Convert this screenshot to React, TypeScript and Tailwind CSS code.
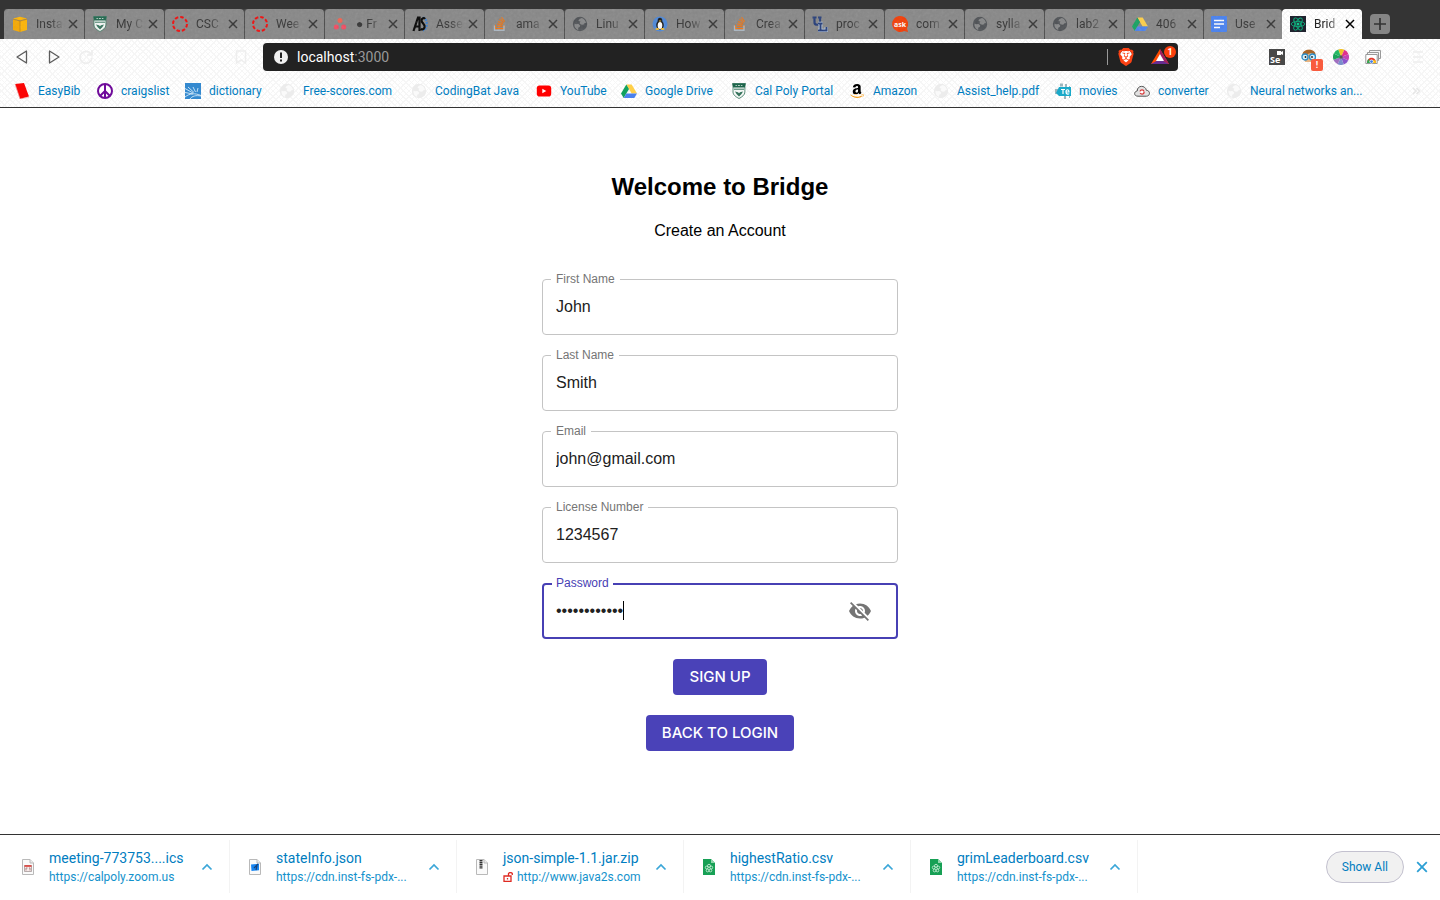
import { useState } from "react";
import type { ReactNode } from "react";
import { FaAmazon, FaStackOverflow } from "react-icons/fa";
import { MdVisibilityOff } from "react-icons/md";
import { SiBrave } from "react-icons/si";

const svg = "h-4 w-4 shrink-0";

function Cube() {
  return (
    <svg className={svg} viewBox="0 0 16 16">
      <path d="M1 3 8 5v11l-7-2z" fill="#f7a800" />
      <path d="m15 3-7 2v11l7-2z" fill="#ffb400" />
      <path d="m1 2.6 7-1.800 7 1.800-7 2z" fill="#ffb400" />
      <path d="M1 3.200 8 5l7-1.800M8 5v11" fill="none" stroke="#a97b2c" strokeWidth=".7" />
    </svg>
  );
}

function PolyShield() {
  return (
    <svg className={svg} viewBox="0 0 16 16">
      <path d="M1.500.5h13l-.6 2.500V9c0 3-3 5-5.900 6.500C5 14 2 12 2 9V3z" fill="#f4f7f5" stroke="#35735c" strokeWidth=".8" />
      <path d="M1.500.5h13l-.6 4H2.200z" fill="#1d654b" />
      <path d="M3 6.200h10" stroke="#35735c" />
      <path d="m4 8.500 3 .8 1 1 1-1 3-.8-1.500 2.500L8 13.500 5.500 11z" fill="#35735c" />
      <path d="M4.500 2.500h1.400m1 0h2m1 0h1.500" stroke="#b5cec4" />
    </svg>
  );
}

function CanvasRing() {
  return (
    <svg className={svg} viewBox="0 0 16 16">
      <circle cx="8" cy="8" r="7" fill="none" stroke="#f00b0b" strokeWidth="2" strokeDasharray="3.500 2" />
    </svg>
  );
}

function Asana() {
  return (
    <svg className={svg} viewBox="0 0 16 16">
      <circle cx="8" cy="4.500" r="2.500" fill="#f4614f" />
      <circle cx="4.300" cy="11" r="2.500" fill="#f2495f" />
      <circle cx="11.700" cy="11" r="2.500" fill="#f2495f" />
    </svg>
  );
}

function ASLogo() {
  return (
    <svg className={svg} viewBox="0 0 16 16">
      <path d="M11 1.500c5 1 5 12 0 13" fill="none" stroke="#3a7fd0" strokeWidth="2" strokeDasharray="2 1" />
      <path d="M1.500 15 6 1.500h1.500V15M3 10.500h5" fill="none" stroke="#000" strokeWidth="2.200" />
      <path d="M13 3c-1-1.500-3.500-1-3.500 1.500S13 8 12.600 11c-.4 2.500-2.600 3-4 1.800" fill="none" stroke="#000" strokeWidth="2.200" />
    </svg>
  );
}

function Tux() {
  return (
    <svg className={svg} viewBox="0 0 16 16">
      <circle cx="8" cy="8" r="7.500" fill="#4a86d8" />
      <ellipse cx="8" cy="4.500" rx="2.300" ry="2.700" fill="#171717" />
      <ellipse cx="8" cy="9" rx="3.800" ry="4.500" fill="#171717" />
      <ellipse cx="8" cy="9.500" rx="2.300" ry="3.600" fill="#fff" />
      <path d="M6.800 4.600h2.400L8 6.300z" fill="#f5b928" />
      <ellipse cx="5.300" cy="13" rx="2" ry="1.100" fill="#f5b928" />
      <ellipse cx="10.700" cy="13" rx="2" ry="1.100" fill="#f5b928" />
    </svg>
  );
}

function StackOverflow() {
  return (
    <svg className={svg} viewBox="0 0 16 16">
      <FaStackOverflow x="1" y="0" size={14} color="#f2720c" />
      <path d="M2.500 9.500v4.700h9.500V9.500" fill="none" stroke="#a9b6c2" strokeWidth="1.400" />
    </svg>
  );
}

function ULLogo() {
  return (
    <svg className={svg} viewBox="0 0 16 16">
      <path d="M.5 1.500h4M6 1.500h3.500M2.500 1.500v5c0 3 5.500 3 5.500 0v-5" fill="none" stroke="#243c78" strokeWidth="2.200" />
      <path d="M6 7.500h4.500M8.500 7.500v7M6 14.500h8.500v-3.500" fill="none" stroke="#c4d4e4" strokeWidth="3.600" />
      <path d="M6 7.500h4.500M8.500 7.500v7M6 14.500h8.500v-3.500" fill="none" stroke="#243c78" strokeWidth="2" />
    </svg>
  );
}

function Ask() {
  return (
    <svg className={svg} viewBox="0 0 16 16">
      <path d="M8 0a8 8 0 1 0 4 15l4 1-1-4A8 8 0 0 0 8 0z" fill="#f23c05" />
      <text x="8" y="10.500" textAnchor="middle" fill="#fff" fontSize="7" fontWeight="700" fontFamily="Open Sans, sans-serif">ask</text>
    </svg>
  );
}

function Drive() {
  return (
    <svg className={svg} viewBox="0 0 16 16">
      <path d="M5.300 1.500h5.400L16 10.500h-5.300z" fill="#ffcf48" />
      <path d="M5.300 1.500 0 10.500 2.700 15 8 6z" fill="#12a15f" />
      <path d="M5.400 10.500H16L13.300 15H2.700z" fill="#4a81ee" />
    </svg>
  );
}

function Docs() {
  return (
    <svg className={svg} viewBox="0 0 16 16">
      <rect width="16" height="16" rx="1" fill="#4680f0" />
      <path d="M3 4.500h10M3 8h10M3 11.500h6" stroke="#fff" strokeWidth="1.700" />
    </svg>
  );
}

function ReactLogo() {
  return (
    <svg className={svg} viewBox="0 0 16 16">
      <path fill="#20232f" d="M0 0h16v16H0z" />
      <g fill="none" stroke="#0fae7c" strokeWidth=".9">
        <ellipse cx="8" cy="8" rx="6.800" ry="2.600" />
        <ellipse cx="8" cy="8" rx="6.800" ry="2.600" transform="rotate(60 8 8)" />
        <ellipse cx="8" cy="8" rx="6.800" ry="2.600" transform="rotate(120 8 8)" />
      </g>
      <circle cx="8" cy="8" r="1.500" fill="#12c48c" />
    </svg>
  );
}

function EasyBib() {
  return (
    <svg className={svg} viewBox="0 0 16 16">
      <path d="m1 1 9-1 5 13.500L6 16z" fill="#fb0505" />
      <path d="m1 1 5 15 9-2" fill="none" stroke="#e9a5a5" strokeWidth=".7" />
    </svg>
  );
}

function Peace() {
  return (
    <svg className={svg} viewBox="0 0 16 16">
      <circle cx="8" cy="8" r="7" fill="#fff" stroke="#6f0b9a" strokeWidth="2" />
      <path d="M8 1v14M8 8l-5 5M8 8l5 5" stroke="#6f0b9a" strokeWidth="2" />
    </svg>
  );
}

function Dictionary() {
  return (
    <svg className={svg} viewBox="0 0 16 16">
      <path fill="#3489cf" d="M0 0h16v16H0z" />
      <path d="M0 5.500 8 10M3 4l6 5.500M8 4l2.500 5M13 5l-1 4M0 9.500l8 1.500M0 14c5-4 10-4 16-1.500M5 16c2-3 6-4 11-3" fill="none" stroke="#d4e9f8" strokeWidth=".9" />
    </svg>
  );
}

function YouTube() {
  return (
    <svg className={svg} viewBox="0 0 16 16">
      <rect x=".8" y="2.500" width="14.400" height="11" rx="2.800" fill="#f00" />
      <path d="m6.300 5.700 4 2.300-4 2.300z" fill="#fff" />
    </svg>
  );
}

function Amazon() {
  return (
    <svg className={svg} viewBox="0 0 16 16">
      <defs>
        <clipPath id="letter"><path d="M0 0h16v10.900H0z" /></clipPath>
        <clipPath id="smile"><path d="M0 10.900h16V16H0z" /></clipPath>
      </defs>
      <g clipPath="url(#letter)"><FaAmazon size={16} color="#000" /></g>
      <g clipPath="url(#smile)"><FaAmazon size={16} color="#f79b14" /></g>
    </svg>
  );
}

function Movies() {
  return (
    <svg className={svg} viewBox="0 0 16 16">
      <path d="M5 .5h3v3H5zM10 1h2v3h-2zM0 6h4v5H0zM9 12h2v4H9zM14 3h1v12h-1z" fill="#9db5bc" />
      <path d="M4 4h12v9H4l-3-3z" fill="#19a9c9" />
      <path d="M6 6.500h4M8 6.500v4.500M11 9h3c0-3-3-3-3 0s3 2 3 1.500" fill="none" stroke="#fff" strokeWidth="1.200" />
    </svg>
  );
}

function Cloud() {
  return (
    <svg className={svg} viewBox="0 0 16 16">
      <path d="M4 13.200C-.5 13.200-.2 8.300 3.200 8 3.200 2 11.200 1.800 12.400 7.300c4.200.2 4 5.900 0 5.900z" fill="#e2e2e2" stroke="#555" />
      <circle cx="8" cy="9" r="2.100" fill="#fff" stroke="#d73636" strokeWidth="1.200" strokeDasharray="5 1.500" />
    </svg>
  );
}

function Selenium() {
  return (
    <svg className={svg} viewBox="0 0 16 16">
      <path fill="#484848" d="M0 0h16v16H0z" />
      <path d="M8 2h4v1l2-1v4l-2-1v1H8z" fill="#fff" />
      <text x="1" y="14" fill="#fff" fontSize="9" fontWeight="700" fontFamily="Open Sans, sans-serif">Se</text>
    </svg>
  );
}

function Glasses() {
  return (
    <svg className={svg} viewBox="0 0 16 16">
      <path d="M2 6C2-1 14-1 14 6l-2 7H4z" fill="#e8b684" />
      <path d="M1.500 6C1-1 15-1 14.500 6L10 4 5 5.500z" fill="#a8662a" />
      <g fill="#d8f1fb" stroke="#2f8dc6" strokeWidth="1.300">
        <circle cx="4" cy="8" r="3" />
        <circle cx="11.500" cy="8" r="3" />
      </g>
      <circle cx="4.500" cy="8" r=".9" fill="#222" />
      <circle cx="11" cy="8" r=".9" fill="#222" />
    </svg>
  );
}

function ColorWheel() {
  const slices = ["#f1c229", "#e0318c", "#c343b5", "#8a55ca", "#7b8ecb", "#a070c0", "#19a35a", "#25b765"];
  return (
    <svg className={svg} viewBox="0 0 16 16">
      {slices.map((fill, i) => (
        <path key={fill} d="M8 8V0a8 8 0 0 1 5.660 2.340z" fill={fill} transform={`rotate(${i * 45 - 20} 8 8)`} />
      ))}
      <circle cx="8" cy="8" r="1.800" fill="#555" />
    </svg>
  );
}

function Windows() {
  return (
    <svg className={svg} viewBox="0 0 16 16">
      <path d="M4.500 1.500h11v8h-11z" fill="#f4f4f4" stroke="#999" />
      <path d="M2.500 3.500h11v8h-11z" fill="#f4f4f4" stroke="#999" />
      <path d="M.8 5.500h11.400v9H.8z" fill="#fff" stroke="#999" />
      <path d="M2 14c0-7 9-7 9 0z" fill="#e33b2e" />
      <path d="M2 14c0-2 .5-3 1.500-4L6 14z" fill="#32a853" />
      <path d="M7.500 14H11c0-1-.2-2-.7-2.700H8z" fill="#fbc116" />
      <circle cx="6.500" cy="12.600" r="2" fill="#fff" />
      <circle cx="6.500" cy="12.600" r="1.400" fill="#3e7de9" />
    </svg>
  );
}

function Globe({ faint = false }: { faint?: boolean }) {
  return (
    <svg className={svg} viewBox="0 0 16 16">
      <circle cx="8" cy="8" r="7.200" fill={faint ? "#ececec" : "#4d5054"} />
      <g fill={faint ? "#fafafa" : "#858687"}>
        <path d="M2.500 7.500 4 8.300l2.500-.2 1.700 1.300-.5 1.600-1.500.7v2.300C3.500 13 2 10.500 2.500 7.500z" />
        <path d="M7 3.500 9.500 2c2.300.4 4.200 2.300 4.500 5l-1.500.2-1.300 1.600-2.300-.3-1.400-1.400 1-1.600-2-.5z" />
      </g>
    </svg>
  );
}

function Cross({ className }: { className: string }) {
  return (
    <svg className={className} viewBox="0 0 10 10" fill="none" stroke="currentColor" strokeWidth="1.500">
      <path d="m1 1 8 8M9 1 1 9" />
    </svg>
  );
}

type TabInfo = { title: string; icon: ReactNode };

const tabs: TabInfo[] = [
  { title: "Insta", icon: <Cube /> },
  { title: "My C", icon: <PolyShield /> },
  { title: "CSC", icon: <CanvasRing /> },
  { title: "Wee", icon: <CanvasRing /> },
  { title: "● Fr", icon: <Asana /> },
  { title: "Asse", icon: <ASLogo /> },
  { title: "ama", icon: <StackOverflow /> },
  { title: "Linu", icon: <Globe /> },
  { title: "How", icon: <Tux /> },
  { title: "Crea", icon: <StackOverflow /> },
  { title: "proc", icon: <ULLogo /> },
  { title: "com", icon: <Ask /> },
  { title: "sylla", icon: <Globe /> },
  { title: "lab2", icon: <Globe /> },
  { title: "406", icon: <Drive /> },
  { title: "Use", icon: <Docs /> },
];

const fade = "whitespace-nowrap [mask-image:linear-gradient(to_right,#000_14px,transparent_28px)]";

const hatch =
  "bg-white bg-[repeating-linear-gradient(45deg,#f6f6f6_0px,#f6f6f6_1px,transparent_1px,transparent_4px),repeating-linear-gradient(-45deg,#f6f6f6_0px,#f6f6f6_1px,transparent_1px,transparent_4px)]";

function TabStrip() {
  return (
    <div className="flex h-[39px] items-end bg-[#343434] pl-1">
      <div className="relative flex h-[30px]">
        {tabs.map((tab, i) => (
          <div
            key={i}
            className="flex w-20 items-center rounded-t-sm border-l border-[#4b4b4b] bg-[#878787] pr-[6px] pl-[7px] text-[#333] first:border-[#878787] nth-[15]:w-[79px] nth-[16]:w-[79px]"
          >
            {tab.icon}
            <span className={`ml-2 ${fade}`}>{tab.title}</span>
            <button type="button" aria-label={`Close ${tab.title}`} className="ml-auto">
              <Cross className="h-[10px] w-[10px]" />
            </button>
          </div>
        ))}
        <svg className="pointer-events-none absolute inset-0 h-full w-full opacity-15" aria-hidden="true">
          <filter id="grain">
            <feTurbulence type="fractalNoise" baseFrequency="0.35" numOctaves="2" />
            <feColorMatrix type="saturate" values="0" />
          </filter>
          <rect width="100%" height="100%" filter="url(#grain)" />
        </svg>
      </div>
      <div className={`flex h-[30px] w-20 items-center rounded-t-sm pr-[7px] pl-2 text-[#222] ${hatch}`}>
        <ReactLogo />
        <span className={`ml-2 ${fade}`}>Brid</span>
        <button type="button" aria-label="Close Brid" className="ml-auto">
          <Cross className="h-[10px] w-[10px] text-black" />
        </button>
      </div>
      <button type="button" aria-label="New tab" className="mb-[5px] ml-2 flex h-5 w-5 items-center justify-center rounded-sm bg-[#858585]">
        <svg className="h-3 w-3" viewBox="0 0 12 12" stroke="#333" strokeWidth="1.700">
          <path d="M6 0v12M0 6h12" />
        </svg>
      </button>
    </div>
  );
}

function AddressRow() {
  return (
    <div className="flex h-9 items-center">
      <div className="flex w-[263px] items-center px-[14px]">
        <button type="button" aria-label="Back">
          <svg className="h-4 w-4" viewBox="0 0 16 16" fill="none" stroke="#5c5c5c" strokeWidth="1.300" strokeLinejoin="round">
            <path d="M12.500 2v12L3 8z" />
          </svg>
        </button>
        <button type="button" aria-label="Forward" className="ml-4">
          <svg className="h-4 w-4" viewBox="0 0 16 16" fill="none" stroke="#5c5c5c" strokeWidth="1.300" strokeLinejoin="round">
            <path d="M3.500 2v12L13 8z" />
          </svg>
        </button>
        <button type="button" aria-label="Reload" className="ml-4">
          <svg className="h-4 w-4" viewBox="0 0 16 16" fill="none" stroke="#eee" strokeWidth="1.700">
            <path d="M13 5a6 6 0 1 0 1 4M14 1v5H9" />
          </svg>
        </button>
        <button type="button" aria-label="Bookmark" className="ml-auto">
          <svg className="h-4 w-4" viewBox="0 0 16 16" fill="none" stroke="#eee" strokeWidth="1.500">
            <path d="M3.500 2h9v12L8 11l-4.500 3z" />
          </svg>
        </button>
      </div>
      <div className="flex h-7 flex-1 items-center rounded bg-[#222] pr-[2px] pl-[11px] text-sm text-[#999]">
        <svg className="h-[14px] w-[14px]" viewBox="0 0 14 14">
          <circle cx="7" cy="7" r="7" fill="#f1f1f1" />
          <path d="M7 2.500V8M7 9.500v2" stroke="#222" strokeWidth="2" />
        </svg>
        <span className="ml-[9px]">
          <span className="text-white">localhost</span>:3000
        </span>
        <span className="ml-auto h-4 w-px bg-[#999]" />
        <svg className="ml-[9px] h-[18px] w-[18px]" viewBox="0 0 18 18">
          <path d="M5 3h8l2 3-2 7-4 3-4-3-2-7z" fill="#fff" />
          <SiBrave size={18} color="#fb4214" />
        </svg>
        <span className="relative ml-4 flex w-[25px]">
          <svg className="h-4 w-[18px]" viewBox="0 0 18 16">
            <path d="M9 0 0 15h18z" fill="#ff4b00" />
            <path d="M0 15h18L9 10z" fill="#662d91" />
            <path d="M9 0v10l9 5z" fill="#9e1f63" />
            <path d="m9 5-4 7h8z" fill="#fff" />
          </svg>
          <span className="absolute -top-[3px] right-0 flex h-3 w-3 items-center justify-center rounded-full bg-[#fb3f0c] text-[9px] font-bold text-white">1</span>
        </span>
      </div>
      <div className="flex w-[262px] items-center gap-4 pr-[14px] pl-[91px]">
        <Selenium />
        <span className="relative">
          <Glasses />
          <span className="absolute -right-[6px] -bottom-[6px] flex h-3 w-3 items-center justify-center rounded-xs bg-[#f85c3e] text-[9px] font-bold text-white">!</span>
        </span>
        <ColorWheel />
        <Windows />
        <button type="button" aria-label="Menu" className="ml-auto">
          <svg className="h-4 w-4" viewBox="0 0 16 16" stroke="#f1f1f1" strokeWidth="2">
            <path d="M3 3h10M3 8h10M3 13h10" />
          </svg>
        </button>
      </div>
    </div>
  );
}

const bookmarks = [
  { name: "EasyBib", icon: <EasyBib />, width: "w-[83px]" },
  { name: "craigslist", icon: <Peace />, width: "w-[88px]" },
  { name: "dictionary", icon: <Dictionary />, width: "w-[94px]" },
  { name: "Free-scores.com", icon: <Globe faint />, width: "w-[132px]" },
  { name: "CodingBat Java", icon: <Globe faint />, width: "w-[125px]" },
  { name: "YouTube", icon: <YouTube />, width: "w-[85px]" },
  { name: "Google Drive", icon: <Drive />, width: "w-[110px]" },
  { name: "Cal Poly Portal", icon: <PolyShield />, width: "w-[118px]" },
  { name: "Amazon", icon: <Amazon />, width: "w-[84px]" },
  { name: "Assist_help.pdf", icon: <Globe faint />, width: "w-[122px]" },
  { name: "movies", icon: <Movies />, width: "w-[79px]" },
  { name: "converter", icon: <Cloud />, width: "w-[92px]" },
  { name: "Neural networks an...", icon: <Globe faint />, width: "w-[150px]" },
];

function Bookmarks() {
  return (
    <nav aria-label="Bookmarks" className="flex h-8 items-center pr-5 pl-[14px]">
      {bookmarks.map((b) => (
        <a key={b.name} href="#" className={`flex shrink-0 items-center gap-2 whitespace-nowrap text-[#007dc0] ${b.width}`}>
          {b.icon}
          {b.name}
        </a>
      ))}
      <button type="button" aria-label="More bookmarks" className="ml-auto">
        <svg className="h-2 w-2" viewBox="0 0 8 8" fill="none" stroke="#e6e6e6" strokeWidth="1.500">
          <path d="m1 1 3 3-3 3M4.500 1l3 3-3 3" />
        </svg>
      </button>
    </nav>
  );
}

function Field({ id, label, initial }: { id: string; label: string; initial: string }) {
  const [value, setValue] = useState(initial);
  return (
    <div className="relative h-14">
      <input
        id={id}
        value={value}
        onChange={(e) => setValue(e.target.value)}
        className="h-full w-full rounded border border-[#c4c4c4] px-[13px] text-base text-[#212121] outline-none"
      />
      <label htmlFor={id} className="absolute -top-2 left-[9px] bg-white px-[5px] text-xs text-[#757575]">
        {label}
      </label>
    </div>
  );
}

function PasswordField() {
  const [value, setValue] = useState("bridgepass12");
  return (
    <div className="relative flex h-14 items-center rounded border-2 border-[#4740b4] pr-6 pl-3">
      <input
        id="password"
        type="password"
        value={value}
        onChange={(e) => setValue(e.target.value)}
        className="h-full min-w-0 flex-1 text-base text-[#212121] outline-none"
      />
      <span className="absolute top-4 left-[79px] h-[19px] w-px bg-black" />
      <button type="button" aria-label="Toggle password visibility">
        <MdVisibilityOff className="h-6 w-6 text-[#757575]" />
      </button>
      <label htmlFor="password" className="absolute -top-[10px] left-2 bg-white px-1 text-xs text-[#4740b4]">
        Password
      </label>
    </div>
  );
}

function SignUp() {
  const button = "h-9 rounded bg-[#4a42b8] px-4 text-[15px] font-medium font-[Inter,sans-serif] text-white";
  return (
    <main className="flex flex-1 flex-col items-center bg-white pt-[65px] font-['Liberation_Sans',Arial,sans-serif] text-black">
      <h1 className="text-2xl leading-7 font-bold">Welcome to Bridge</h1>
      <p className="mt-[18px] text-base">Create an Account</p>
      <form className="mt-9 flex w-full max-w-[356px] flex-col gap-5" onSubmit={(e) => e.preventDefault()}>
        <Field id="first" label="First Name" initial="John" />
        <Field id="last" label="Last Name" initial="Smith" />
        <Field id="email" label="Email" initial="john@gmail.com" />
        <Field id="license" label="License Number" initial="1234567" />
        <PasswordField />
        <div className="flex flex-col items-center gap-5">
          <button type="submit" className={button}>SIGN UP</button>
          <button type="button" className={button}>BACK TO LOGIN</button>
        </div>
      </form>
    </main>
  );
}

function FileIcon({ kind }: { kind: string }) {
  if (kind === "csv") {
    return (
      <svg className="h-4 w-3 shrink-0" viewBox="0 0 12 16">
        <path d="M0 0h8l4 4v12H0z" fill="#17a055" />
        <path d="M8 0v4h4z" fill="#8fd6ab" />
        <g fill="none" stroke="#d4f2df" strokeWidth=".8">
          <circle cx="6" cy="6.800" r="1.500" />
          <circle cx="3.700" cy="8.500" r="1.400" />
          <circle cx="8.300" cy="8.500" r="1.400" />
          <circle cx="4.600" cy="11.500" r="1.400" />
          <circle cx="7.400" cy="11.500" r="1.400" />
        </g>
      </svg>
    );
  }
  return (
    <svg className="h-4 w-3 shrink-0" viewBox="0 0 12 16">
      <path d="M.5.5h7.500L11.500 4v11.500H.5z" fill="#fafafa" stroke="#b9b9b9" />
      <path d="M8 .5V4h3.500" fill="#eee" stroke="#b9b9b9" />
      {kind === "ics" && (
        <g>
          <path d="M2.500 6.500h7v6h-7z" fill="#f7e9e8" stroke="#9a8d8c" strokeWidth=".7" />
          <path d="M2.500 7h7" stroke="#dc3c36" strokeWidth="1.600" />
          <path d="M4 11.500v-2.500h1.500M7 9h1v2.500" fill="none" stroke="#a88" />
        </g>
      )}
      {kind === "json" && (
        <g>
          <path d="m2 5.500 8-.8v6.600L2.500 12z" fill="#1785f1" />
          <path d="m5 9 4-4M8 6.500 7 11" stroke="#174279" strokeWidth="1.200" />
        </g>
      )}
      {kind === "zip" && <path d="M5 1v9" stroke="#333" strokeWidth="3" strokeDasharray="1.300 .5" />}
    </svg>
  );
}

const downloads = [
  { name: "meeting-773753....ics", source: "https://calpoly.zoom.us", kind: "ics" },
  { name: "stateInfo.json", source: "https://cdn.inst-fs-pdx-...", kind: "json" },
  { name: "json-simple-1.1.jar.zip", source: "http://www.java2s.com", kind: "zip" },
  { name: "highestRatio.csv", source: "https://cdn.inst-fs-pdx-...", kind: "csv" },
  { name: "grimLeaderboard.csv", source: "https://cdn.inst-fs-pdx-...", kind: "csv" },
];

function Downloads() {
  return (
    <footer className="flex h-[66px] items-center border-t border-[#333] bg-white pr-3 pb-[2px] pl-[3px]">
      {downloads.map((d) => (
        <div key={d.name} className="flex h-[53px] w-[227px] shrink-0 items-center border-r border-[#f3f3f3] pr-4 pl-[19px]">
          <FileIcon kind={d.kind} />
          <div className="ml-[15px] min-w-0">
            <a href="#" className="block text-sm whitespace-nowrap text-[#007dc0]">{d.name}</a>
            <div className="mt-px flex items-center gap-1 leading-4 whitespace-nowrap text-[#1492cc]">
              {d.kind === "zip" && (
                <svg className="h-[10px] w-[10px]" viewBox="0 0 10 10" fill="none" stroke="#df2a22" strokeWidth="1.300">
                  <path d="M1 4h7v5.300H1zM5.500 4V1.500C6 .3 9 .3 9.300 1.500V3M4.500 6v1.500" />
                </svg>
              )}
              {d.source}
            </div>
          </div>
          <button type="button" aria-label={`Options for ${d.name}`} className="ml-auto text-[#3aa6d8]">
            <svg className="h-3 w-3" viewBox="0 0 12 12" fill="none" stroke="currentColor" strokeWidth="1.700">
              <path d="m1.500 8.500 4.500-4.500 4.500 4.500" />
            </svg>
          </button>
        </div>
      ))}
      <button type="button" className="ml-auto h-8 rounded-full border border-[#c3c1cf] bg-[#f1f1f1] px-[15px] whitespace-nowrap text-[#007dc0]">
        Show All
      </button>
      <button type="button" aria-label="Close downloads" className="ml-3 text-[#2c9fd4]">
        <Cross className="h-3 w-3" />
      </button>
    </footer>
  );
}

export default function App() {
  return (
    <div className="flex min-h-screen flex-col font-[Roboto,sans-serif] text-xs">
      <TabStrip />
      <header className={`border-b border-[#333] ${hatch}`}>
        <AddressRow />
        <Bookmarks />
      </header>
      <SignUp />
      <Downloads />
    </div>
  );
}
